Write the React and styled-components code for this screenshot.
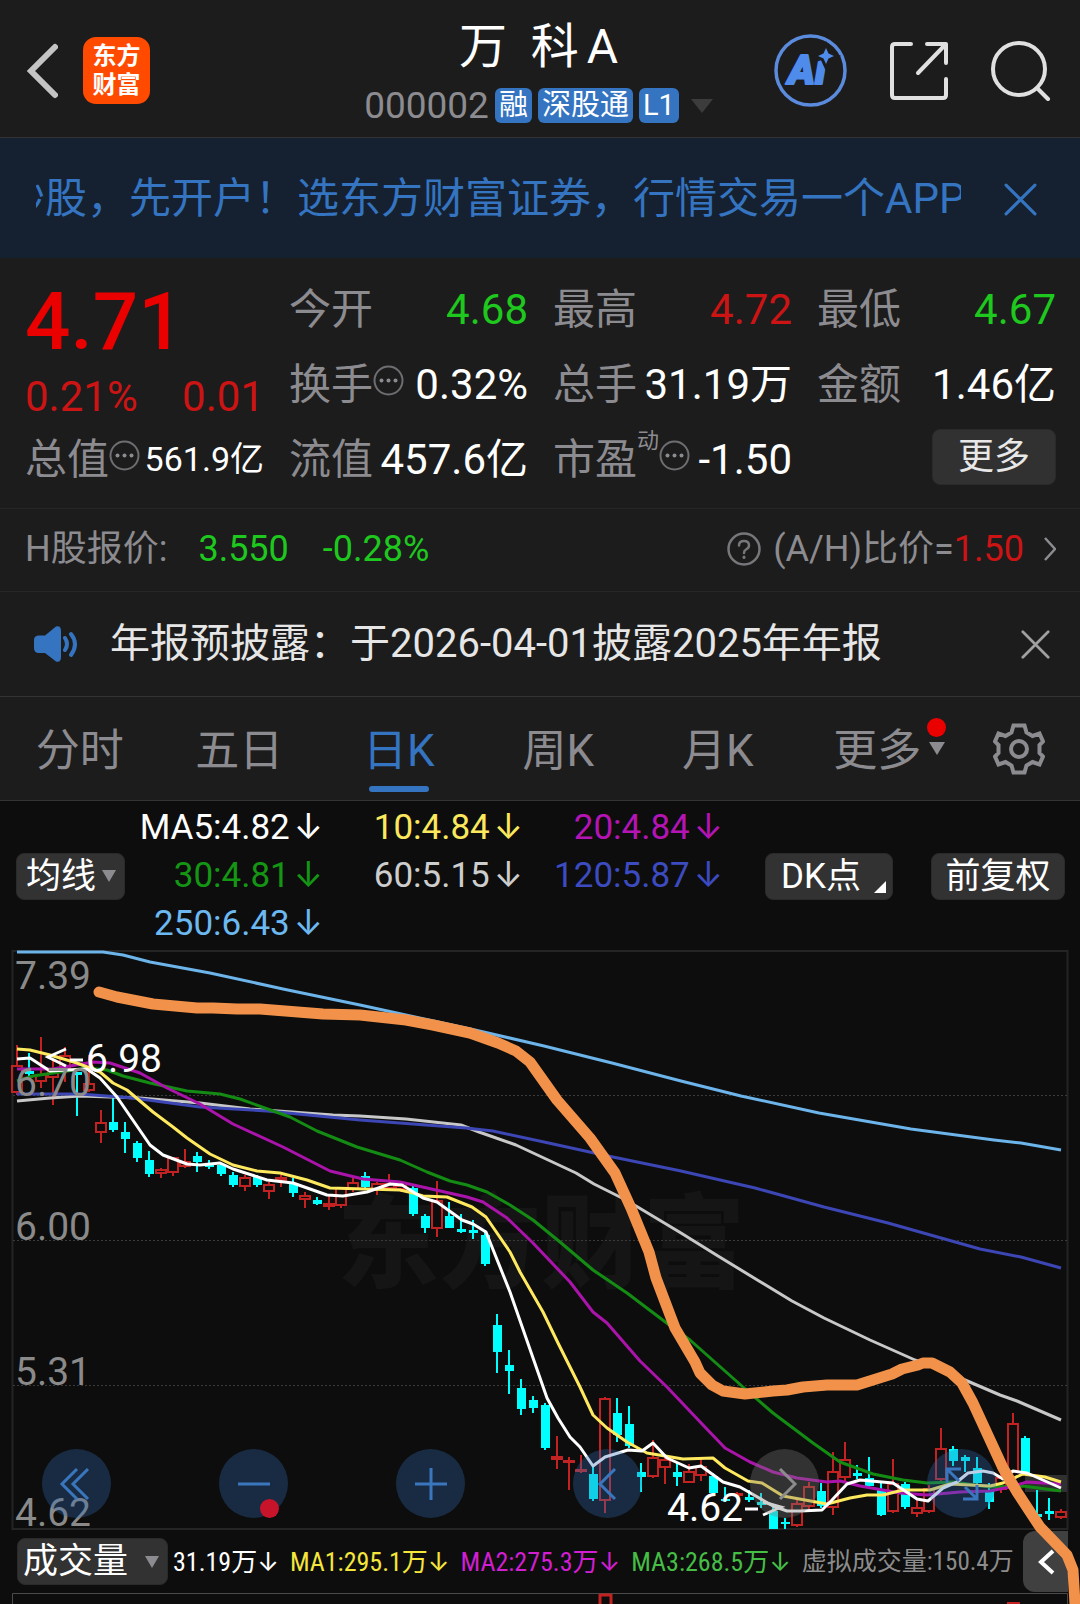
import React from "react";
import styled, { createGlobalStyle } from "styled-components";

const GlobalStyle = createGlobalStyle`
  *, *::before, *::after { box-sizing: border-box; }
  body {
    margin: 0;
    background: #0d0d0d;
    font-family: Roboto, "Noto Sans CJK SC", sans-serif;
    color: #ffffff;
  }
  button, select { font-family: inherit; margin: 0; }
  h1, p, dl, dt, dd { margin: 0; font-weight: 400; }
  svg { display: block; }
`;

const color = {
  panel: "#1c1c1c",
  line: "#333333",
  muted: "#8c8b90",
  accent: "#3474c0",
  up: "#cc1414",
  down: "#1ec81e",
};

const Page = styled.div`
  display: flex;
  flex-direction: column;
  overflow: hidden;
`;

const IconButton = styled.button`
  display: flex;
  align-items: center;
  justify-content: center;
  flex: none;
  padding: 0;
  border: 0;
  background: none;
  color: ${(p) => p.$color || "#e0e0e0"};
  cursor: pointer;
`;

/* ---------- header ---------- */

const Header = styled.header`
  display: grid;
  grid-template-columns: 1fr auto 1fr;
  align-items: center;
  height: 138px;
  padding: 4px 29px 0 26px;
  background: ${color.panel};
  border-bottom: 1px solid ${color.line};
`;

const HeaderSide = styled.div`
  display: flex;
  align-items: center;
  gap: ${(p) => p.$gap}px;
  justify-content: ${(p) => (p.$end ? "flex-end" : "flex-start")};
`;

const Logo = styled.div`
  display: flex;
  flex-direction: column;
  align-items: center;
  justify-content: center;
  width: 67px;
  height: 67px;
  border-radius: 13px;
  background: #ff4a00;
  font-size: 24px;
  line-height: 29px;
  font-weight: 700;
`;

const Title = styled.div`
  display: flex;
  flex-direction: column;
  align-items: center;
  gap: 8px;
  padding-top: 6px;
`;

const StockName = styled.h1`
  font-size: 48px;
  line-height: 56px;
  white-space: pre;
`;

const ShareClass = styled.span`
  margin-left: 8px;
`;

const CodeRow = styled.div`
  display: flex;
  align-items: center;
  gap: 6px;
  height: 46px;
  color: ${color.muted};
  font-size: 37px;
  line-height: 46px;
`;

const Badge = styled.span`
  padding: 0 4px;
  border-radius: 6px;
  background: ${color.accent};
  color: #ffffff;
  font-size: 29px;
  line-height: 35px;
`;

const Caret = styled.span`
  flex: none;
  width: 0;
  height: 0;
  border-left: ${(p) => p.$w}px solid transparent;
  border-right: ${(p) => p.$w}px solid transparent;
  border-top: ${(p) => p.$h}px solid ${(p) => p.$color || color.muted};
`;

const CodeCaret = styled(Caret)`
  margin-left: 6px;
`;

/* ---------- promo banner ---------- */

const Promo = styled.section`
  display: flex;
  align-items: center;
  height: 120px;
  padding: 2px 43px 0 36px;
  gap: 43px;
  background: #152130;
`;

const PromoText = styled.a`
  flex: 1;
  min-width: 0;
  overflow: hidden;
  white-space: nowrap;
  color: ${color.accent};
  font-size: 42px;
  line-height: 60px;
  text-indent: -33px;
  text-decoration: none;
`;

/* ---------- quote ---------- */

const Quote = styled.section`
  display: grid;
  grid-template-columns: repeat(4, minmax(0, 1fr));
  grid-auto-rows: 75px;
  column-gap: 25px;
  padding: 14px 24px 11px 25px;
  background: ${color.panel};
  border-bottom: 1px solid #262626;
`;

const Price = styled.div`
  grid-row: span 2;
  color: #eb0000;
`;

const Last = styled.p`
  font-size: 80px;
  line-height: 100px;
  font-weight: 500;
`;

const Change = styled.p`
  display: flex;
  justify-content: space-between;
  color: ${color.up};
  font-size: 42px;
  line-height: 50px;
`;

const Stat = styled.dl`
  display: flex;
  align-items: center;
  justify-content: space-between;
  white-space: nowrap;
  font-size: 42px;
  line-height: 75px;
`;

const StatName = styled.dt`
  display: flex;
  align-items: center;
  color: ${color.muted};
  svg { margin-bottom: 8px; }
`;

const Superscript = styled.sup`
  align-self: flex-start;
  font-size: 22px;
  line-height: 38px;
`;

const StatValue = styled.dd`
  color: ${(p) => p.$color || "#ffffff"};
  font-size: ${(p) => (p.$small ? 34 : 42)}px;
`;

const MoreButton = styled.button`
  align-self: center;
  justify-self: end;
  width: 124px;
  height: 56px;
  margin-bottom: 6px;
  padding: 0;
  border: 1px solid #2a2a2a;
  border-radius: 8px;
  background: #313131;
  color: #e8e8e8;
  font-size: 36px;
  line-height: 48px;
`;

/* ---------- H share row and notice ---------- */

const HShare = styled.a`
  display: flex;
  align-items: center;
  height: 83px;
  padding: 0 24px 2px 25px;
  background: ${color.panel};
  border-bottom: 1px solid #262626;
  color: ${color.muted};
  font-size: 36px;
  line-height: 48px;
  white-space: nowrap;
  text-decoration: none;
`;

const HValue = styled.span`
  margin-left: ${(p) => p.$gap}px;
  color: ${(p) => p.$color};
`;

const Ratio = styled.span`
  display: flex;
  align-items: center;
  gap: 12px;
  margin-left: auto;
`;

const RatioArrow = styled.span`
  margin-left: 8px;
`;

const Notice = styled.section`
  display: flex;
  align-items: center;
  height: 105px;
  padding: 0 30px 0 33px;
  background: ${color.panel};
  border-bottom: 1px solid ${color.line};
  color: #e6e6e6;
`;

const NoticeText = styled.p`
  flex: 1;
  margin-left: 31px;
  font-size: 40px;
  line-height: 60px;
  white-space: nowrap;
`;

/* ---------- period tabs ---------- */

const Tabs = styled.nav`
  display: flex;
  height: 104px;
  background: ${color.panel};
  border-bottom: 1px solid ${color.line};
`;

const Tab = styled.button`
  position: relative;
  flex: 1;
  padding: 4px 0 0;
  border: 0;
  background: none;
  color: ${(p) => (p.$active ? color.accent : color.muted)};
  font-size: 44px;
  line-height: 60px;
  &::after {
    content: "";
    display: ${(p) => (p.$active ? "block" : "none")};
    position: absolute;
    left: 50%;
    bottom: 8px;
    width: 60px;
    height: 6px;
    margin-left: -30px;
    border-radius: 3px;
    background: ${color.accent};
  }
`;

const TabMark = styled.span`
  position: absolute;
  right: 11px;
  top: 21px;
  display: flex;
  flex-direction: column;
  align-items: center;
  gap: 5px;
  width: 19px;
`;

const Dot = styled.span`
  width: 19px;
  height: 19px;
  border-radius: 50%;
  background: #eb0000;
`;

const Settings = styled(IconButton)`
  width: 123px;
`;

/* ---------- moving average legend ---------- */

const Legend = styled.section`
  display: flex;
  align-items: center;
  padding: 3px 15px 0 16px;
`;

const SelectBox = styled.label`
  position: relative;
  display: flex;
  align-items: center;
  flex: none;
`;

const Picker = styled.select`
  appearance: none;
  width: ${(p) => p.$width}px;
  height: 47px;
  padding: 0 0 0 ${(p) => p.$pad}px;
  border: 1px solid #2a2a2a;
  border-radius: 8px;
  background: #323232;
  color: #ffffff;
  font-size: 35px;
  line-height: 45px;
`;

const PickerCaret = styled(Caret)`
  position: absolute;
  right: 9px;
  pointer-events: none;
`;

const Averages = styled.div`
  flex: 1;
  display: grid;
  grid-template-columns: 19fr 20fr 20fr;
  grid-auto-rows: 48px;
  justify-items: end;
  padding-left: 8px;
`;

const Arrow = styled.span`
  font-family: Inter, sans-serif;
  line-height: 1;
`;

const Average = styled.span`
  color: ${(p) => p.$color};
  font-size: 35px;
  line-height: 48px;
  white-space: nowrap;
  ${Arrow} { margin-left: 4px; }
`;

const ToolButton = styled.button`
  position: relative;
  flex: none;
  width: ${(p) => p.$width}px;
  height: 47px;
  margin-left: ${(p) => p.$gap}px;
  padding: 0 ${(p) => p.$padRight || 0}px 0 0;
  border: 1px solid #2a2a2a;
  border-radius: 8px;
  background: #323232;
  color: #ffffff;
  font-size: 35px;
  line-height: 45px;
`;

const Corner = styled.span`
  position: absolute;
  right: 6px;
  bottom: 6px;
  border-left: 12px solid transparent;
  border-bottom: 12px solid #ffffff;
`;

/* ---------- chart ---------- */

const ChartArea = styled.section`
  position: relative;
`;

const Plot = styled.div`
  position: relative;
`;

const Canvas = styled.svg`
  width: 100%;
  height: auto;
`;

const Drawing = styled.svg`
  position: absolute;
  inset: 0;
  width: 100%;
  height: 100%;
  pointer-events: none;
`;

const Controls = styled.div`
  position: absolute;
  left: 42px;
  right: 84px;
  bottom: 13px;
  display: flex;
  justify-content: space-between;
`;

const RoundButton = styled(IconButton)`
  position: relative;
  width: 69px;
  height: 69px;
  border-radius: 50%;
  background: ${(p) => (p.$off ? "rgba(120,120,120,0.35)" : "rgba(50,110,180,0.32)")};
  color: ${(p) => (p.$off ? "#8c8c8c" : "#3a76bd")};
`;

const ZoomDot = styled(Dot)`
  position: absolute;
  right: 9px;
  bottom: 0;
  background: #c8142a;
`;

const VolumeRow = styled.div`
  display: flex;
  align-items: center;
  height: 61px;
  padding: 0 12px 0 17px;
  white-space: nowrap;
`;

const VolumeItem = styled.span`
  margin-left: ${(p) => p.$gap}px;
  color: ${(p) => p.$color};
  font-family: "Roboto Condensed", Roboto, "Noto Sans CJK SC", sans-serif;
  font-size: ${(p) => p.$size || 26}px;
  line-height: 46px;
`;

const Collapse = styled(IconButton)`
  width: 45px;
  height: 61px;
  margin-left: auto;
  border-radius: 12px 0 0 12px;
  background: #404040;
  color: #ffffff;
`;

const averages = [
  ["MA5:4.82", "#ffffff"],
  ["10:4.84", "#fbe85c"],
  ["20:4.84", "#b414b4"],
  ["30:4.81", "#149614"],
  ["60:5.15", "#cdcdcd"],
  ["120:5.87", "#3c4bc0"],
  ["250:6.43", "#6cb8f0"],
];

// Each candle: direction, high, low, body top, body bottom,
// in thirds of a unit below the block's origin.
const candleBlocks = [
  {
    origin: 940,
    first: 0,
    rows: [
      ["r", 315, 465, 375, 460], ["c", 340, 410, 392, 403], ["r", 290, 445, 402, 425],
      ["r", 360, 495, 385, 415], ["r", 322, 425, 345, 390], ["c", 395, 527, 397, 406],
      ["r", 345, 455, 430, 453], ["r", 510, 608, 545, 580], ["c", 475, 577, 547, 570],
      ["c", 546, 640, 577, 596], ["c", 603, 665, 610, 653], ["c", 634, 710, 660, 703],
      ["r", 685, 714, 687, 701], ["r", 650, 708, 652, 698], ["r", 628, 684, 664, 680],
      ["c", 636, 696, 647, 665], ["c", 660, 688, 670, 680], ["c", 668, 709, 675, 703],
      ["c", 697, 740, 704, 735], ["r", 705, 752, 710, 742], ["c", 704, 740, 710, 735],
      ["r", 725, 778, 731, 755], ["r", 705, 740, 712, 722], ["c", 715, 770, 730, 758],
      ["r", 755, 803, 764, 780], ["c", 770, 796, 780, 791], ["r", 765, 809, 788, 801],
    ],
  },
  {
    origin: 1140,
    first: 27,
    rows: [
      ["r", 140, 203, 142, 199], ["r", 115, 155, 127, 150], ["c", 97, 143, 108, 140],
      ["r", 125, 165, 128, 150], ["r", 103, 150, 130, 148], ["r", 128, 155, 135, 150],
      ["c", 137, 227, 143, 221], ["c", 222, 278, 229, 265], ["r", 123, 290, 180, 268],
      ["c", 185, 265, 229, 265], ["c", 222, 278, 266, 277], ["c", 240, 297, 271, 278],
      ["c", 270, 378, 285, 373], ["c", 523, 698, 556, 636], ["c", 630, 762, 675, 692],
      ["c", 717, 824, 744, 806], ["c", 768, 818, 781, 805], ["c", 790, 931, 795, 925],
      ["r", 888, 987, 948, 960], ["r", 951, 1050, 960, 970], ["r", 945, 998, 987, 997],
      ["c", 975, 1082, 1001, 1076], ["r", 772, 1119, 774, 1084], ["c", 774, 906, 820, 886],
      ["c", 799, 925, 851, 917], ["c", 969, 1056, 995, 1012],
    ],
  },
  {
    origin: 1340,
    first: 53,
    rows: [
      ["r", 300, 413, 352, 410], ["r", 350, 432, 358, 383], ["c", 370, 438, 395, 412],
      ["r", 372, 430, 392, 428], ["r", 352, 423, 378, 408], ["c", 400, 465, 408, 460],
      ["c", 440, 485, 478, 484], ["r", 455, 470, 460, 467], ["c", 450, 485, 472, 480],
      ["c", 458, 505, 486, 496], ["c", 500, 568, 514, 568], ["c", 535, 568, 545, 552],
      ["r", 470, 562, 490, 558], ["r", 425, 510, 438, 500], ["c", 428, 505, 452, 498],
      ["r", 335, 525, 394, 503], ["r", 307, 425, 356, 415], ["c", 375, 418, 400, 408],
      ["c", 350, 440, 415, 437], ["c", 428, 527, 450, 525], ["r", 358, 520, 430, 517],
      ["c", 425, 507, 432, 500], ["r", 480, 532, 500, 522], ["r", 435, 518, 445, 515],
      ["r", 263, 430, 323, 420], ["c", 318, 378, 326, 362], ["c", 345, 395, 352, 362],
      ["c", 350, 450, 385, 430], ["c", 430, 507, 450, 487], ["r", 400, 460, 410, 450],
      ["r", 219, 400, 248, 395], ["c", 287, 400, 294, 400], ["c", 450, 530, 522, 530],
      ["c", 475, 540, 513, 522], ["r", 508, 538, 512, 535],
    ],
  },
];

const candles = candleBlocks.flatMap(({ origin, first, rows }) =>
  rows.map(([kind, ...ys], i) => {
    const [high, low, top, bottom] = ys.map((y) => Math.round(origin + y / 3));
    return { kind, x: 17 + (first + i) * 12, high, low, top, bottom };
  })
);

const lines = [
  ["#6cb4ea", "17,952 103,952 123,955 150,962 210,973 283,989 360,1005 475,1030 544,1046 612,1063 681,1081 741,1096 819,1113 911,1129 994,1140 1021,1143 1061,1150"],
  ["#c8c8c8", "17,1101 50,1098 80,1096 140,1098 200,1103 250,1109 333,1115 360,1116 406,1119 461,1125 479,1132 516,1145 576,1173 594,1184 622,1198 636,1206 681,1233 718,1256 759,1281 792,1301 824,1318 870,1340 915,1360 965,1380 1000,1395 1017,1401 1061,1420"],
  ["#3c46b4", "17,1094 80,1094 133,1098 200,1107 267,1111 360,1120 466,1128 493,1131 544,1142 608,1156 681,1171 755,1188 824,1207 888,1223 980,1249 1021,1257 1061,1268"],
  ["#148c14", "17,1081 33,1076 67,1071 87,1068 107,1070 123,1076 150,1083 187,1091 220,1094 240,1099 290,1117 317,1131 357,1147 400,1160 427,1172 450,1181 467,1185 487,1192 510,1205 533,1220 560,1242 593,1270 627,1293 668,1324 690,1340 743,1387 773,1413 813,1443 840,1462 873,1474 903,1480 927,1483 953,1482 990,1487 1023,1486 1061,1491"],
  ["#aa14aa", "17,1069 53,1069 93,1062 110,1063 140,1073 167,1088 200,1104 233,1124 283,1147 330,1171 363,1179 400,1182 427,1188 467,1197 483,1202 507,1218 533,1243 570,1282 593,1312 607,1323 640,1361 667,1387 703,1425 725,1448 750,1462 773,1472 797,1478 827,1482 840,1481 860,1486 900,1493 927,1495 960,1492 990,1491 1010,1487 1027,1482 1061,1484"],
  ["#ffe95f", "17,1049 30,1050 50,1055 77,1063 100,1072 113,1083 127,1090 153,1112 173,1127 187,1138 210,1154 233,1165 257,1171 280,1173 307,1180 330,1188 400,1190 413,1193 423,1196 447,1197 472,1207 486,1217 510,1252 520,1272 543,1312 558,1343 580,1387 593,1415 607,1428 627,1442 647,1453 683,1459 713,1458 725,1468 748,1481 762,1483 783,1496 827,1504 850,1498 867,1495 883,1495 903,1490 930,1490 950,1484 990,1486 1003,1483 1023,1474 1045,1477 1061,1482"],
  ["#ffffff", "17,1059 30,1058 50,1071 67,1070 87,1069 100,1078 117,1097 150,1145 163,1155 187,1164 200,1165 220,1163 233,1169 267,1180 293,1183 327,1195 343,1196 367,1192 390,1184 402,1185 423,1198 437,1202 462,1220 473,1224 486,1232 510,1292 547,1398 558,1418 570,1437 580,1447 593,1466 605,1457 628,1450 642,1451 653,1443 667,1458 689,1468 701,1466 723,1482 740,1487 773,1506 787,1511 800,1511 822,1510 832,1500 847,1484 860,1480 893,1483 917,1499 928,1501 943,1488 957,1482 968,1473 983,1471 993,1473 1003,1479 1013,1471 1027,1473 1061,1488"],
];

const trend =
  "99,992 117,997 153,1004 197,1008 213,1008 237,1009 260,1009 323,1014 360,1015 406,1020 433,1025 470,1033 498,1043 516,1051 530,1062 557,1100 590,1138 615,1173 631,1208 649,1252 656,1278 675,1328 695,1362 700,1373 712,1385 723,1391 745,1394 773,1391 787,1390 803,1387 827,1385 857,1385 892,1374 902,1369 918,1365 923,1363 932,1363 950,1372 962,1383 973,1403 1003,1468 1017,1492 1040,1527 1067,1555 1073,1570 1075,1604";

const axis = [
  ["7.39", 989],
  ["6.70", 1096],
  ["6.00", 1240],
  ["5.31", 1385],
  ["4.62", 1526],
];

function Close({ size }) {
  return (
    <svg width={size} height={size} viewBox="0 0 32 32" stroke="currentColor" strokeWidth="3" strokeLinecap="round">
      <path d="M2 2 30 30M30 2 2 30" />
    </svg>
  );
}

function InfoDots() {
  return (
    <svg width="31" height="31" viewBox="0 0 31 31" fill="none">
      <circle cx="15.5" cy="15.5" r="14" stroke="#6e6e72" strokeWidth="2" />
      <g fill="#8c8b90">
        <circle cx="8.5" cy="15.5" r="2" />
        <circle cx="15.5" cy="15.5" r="2" />
        <circle cx="22.5" cy="15.5" r="2" />
      </g>
    </svg>
  );
}

function StatCell({ name, value, tone, small, info, sup }) {
  return (
    <Stat>
      <StatName>
        {name}
        {sup && <Superscript>{sup}</Superscript>}
        {info && <InfoDots />}
      </StatName>
      <StatValue $color={tone} $small={small}>{value}</StatValue>
    </Stat>
  );
}

function Candle({ kind, x, high, low, top, bottom }) {
  const h = Math.max(bottom - top, 2);
  if (kind === "c") {
    return (
      <g fill="#00ffff">
        <rect x={x - 1} y={high} width="2" height={low - high} />
        <rect x={x - 4} y={top} width="9" height={h} />
      </g>
    );
  }
  return (
    <g fill="none" stroke="#c32222" strokeWidth="2">
      <path d={`M${x} ${high}V${top}M${x} ${bottom}V${low}`} />
      <rect x={x - 5} y={top + 1} width="10" height={Math.max(h - 2, 1)} />
    </g>
  );
}

function PriceChart() {
  return (
    <Canvas viewBox="0 948 1080 583" role="img" aria-label="日K">
      <text x="541" y="1280" textAnchor="middle" fontSize="102" fontWeight="900" fontFamily="Noto Sans CJK SC, sans-serif" fill="#151515">
        东方财富
      </text>
      <rect x="12.5" y="951" width="1055" height="578" fill="none" stroke="#242424" strokeWidth="2" />
      <g stroke="#3a3a3a" strokeDasharray="2 2">
        <path d="M13 1095.5H1067M13 1240.5H1067M13 1385.5H1067" />
      </g>
      <rect x="1025" y="1475" width="42" height="17" fill="#303030" />
      {candles.map((c) => <Candle key={c.x} {...c} />)}
      <g fill="none" strokeWidth="3" strokeLinejoin="round">
        {lines.map(([stroke, points]) => <polyline key={stroke} stroke={stroke} points={points} />)}
      </g>
      <g fill="#8a8a8a" fontSize="39" fontFamily="Roboto, sans-serif">
        {axis.map(([label, y]) => <text key={label} x="15" y={y}>{label}</text>)}
      </g>
      <g fill="none" stroke="#ffffff" strokeWidth="3">
        <path d="M66 1049 48 1057 66 1066M70 1060H83" />
        <path d="M745 1509H758M763 1502 781 1507 763 1515" />
      </g>
      <g fill="#ffffff" fontSize="39" fontFamily="Roboto, sans-serif">
        <text x="86" y="1072">6.98</text>
        <text x="667" y="1521">4.62</text>
      </g>
    </Canvas>
  );
}

const controlIcons = [
  ["向左到底", "M18 3 3 18 18 33M29 3 14 18 29 33"],
  ["缩小", "M2 18H34"],
  ["放大", "M2 18H34M18 2V34"],
  ["向左", "M25 3 10 18 25 33"],
  ["向右", "M13 3 28 18 13 33"],
  ["全屏", "M3 17V3H17M3 3 15 15M33 19V33H19M33 33 21 21"],
];

export default function App() {
  return (
    <Page>
      <GlobalStyle />

      <Header>
        <HeaderSide $gap={25}>
          <IconButton aria-label="返回" $color="#c4c4c4">
            <svg width="32" height="56" viewBox="0 0 32 56" fill="none" stroke="currentColor" strokeWidth="6" strokeLinecap="round">
              <path d="M29 4 5 28 29 52" />
            </svg>
          </IconButton>
          <Logo>
            <span>东方</span>
            <span>财富</span>
          </Logo>
        </HeaderSide>
        <Title>
          <StockName>{"万  科"}<ShareClass>A</ShareClass></StockName>
          <CodeRow>
            <span>000002</span>
            <Badge>融</Badge>
            <Badge>深股通</Badge>
            <Badge>L1</Badge>
            <CodeCaret $w={11} $h={14} $color="#3c3c3c" />
          </CodeRow>
        </Title>
        <HeaderSide $end $gap={43}>
          <IconButton aria-label="Ai">
            <svg width="73" height="73" viewBox="0 0 73 73">
              <circle cx="36.5" cy="36.5" r="34.5" fill="none" stroke="#5a8bdc" strokeWidth="3.5" />
              <text x="14" y="50" fontSize="41" fontWeight="900" fontStyle="italic" fontFamily="Roboto, sans-serif" fill="#4f8bea" stroke="#4f8bea" strokeWidth="2" strokeLinejoin="round">Ai</text>
              <path d="M52 14 54.500 19.500 60 22 54.500 24.500 52 30 49.500 24.500 44 22 49.500 19.500Z" fill="#4f8bea" stroke="#1c1c1c" strokeWidth="6" paintOrder="stroke" />
            </svg>
          </IconButton>
          <IconButton aria-label="分享">
            <svg width="58" height="58" viewBox="0 0 58 58" fill="none" stroke="currentColor" strokeWidth="4" strokeLinecap="round" strokeLinejoin="round">
              <path d="M21 2H5Q2 2 2 5V53Q2 56 5 56H53Q56 56 56 53V37M37 2H56V21M55 3 28 31" />
            </svg>
          </IconButton>
          <IconButton aria-label="搜索">
            <svg width="60" height="60" viewBox="0 0 60 60" fill="none" stroke="currentColor" strokeWidth="4" strokeLinecap="round">
              <circle cx="28" cy="28" r="26" />
              <path d="M46 47 57 58" />
            </svg>
          </IconButton>
        </HeaderSide>
      </Header>

      <Promo>
        <PromoText href="#account">炒股，先开户！选东方财富证券，行情交易一个APP</PromoText>
        <IconButton aria-label="关闭" $color="#3474c0"><Close size={33} /></IconButton>
      </Promo>

      <Quote>
        <Price>
          <Last>4.71</Last>
          <Change><span>0.21%</span><span>0.01</span></Change>
        </Price>
        <StatCell name="今开" value="4.68" tone={color.down} />
        <StatCell name="最高" value="4.72" tone={color.up} />
        <StatCell name="最低" value="4.67" tone={color.down} />
        <StatCell name="换手" info value="0.32%" />
        <StatCell name="总手" value="31.19万" />
        <StatCell name="金额" value="1.46亿" />
        <StatCell name="总值" info small value="561.9亿" />
        <StatCell name="流值" value="457.6亿" />
        <StatCell name="市盈" sup="动" info value="-1.50" />
        <MoreButton>更多</MoreButton>
      </Quote>

      <HShare href="#h-share">
        <span>H股报价:</span>
        <HValue $gap={31} $color={color.down}>3.550</HValue>
        <HValue $gap={34} $color={color.down}>-0.28%</HValue>
        <Ratio>
          <svg width="34" height="34" viewBox="0 0 34 34" fill="none" stroke="#77767a" strokeWidth="2.5" strokeLinecap="round">
            <circle cx="17" cy="17" r="15.500" />
            <path d="M12 13.500Q12 9 17 9T22 13.500Q22 16 19 17.500Q17 18.500 17 21" />
            <path d="M17 25V25.500" strokeWidth="3" />
          </svg>
          <span>(A/H)比价=<HValue $gap={0} $color={color.up}>1.50</HValue></span>
          <RatioArrow>
            <svg width="12" height="24" viewBox="0 0 12 24" fill="none" stroke="#8c8b90" strokeWidth="2.500">
              <path d="M1 1 11 12 1 23" />
            </svg>
          </RatioArrow>
        </Ratio>
      </HShare>

      <Notice>
        <svg width="46" height="38" viewBox="0 0 46 38" fill="none" stroke="#3474c0" strokeWidth="4" strokeLinecap="round">
          <path d="M6 10.500H12L23 1.500Q28 0 28 6V32Q28 38 23 36.500L12 28H6Q1 28 1 23V15Q1 10.500 6 10.500Z" fill="#3474c0" stroke="none" />
          <path d="M32 13Q36 19 32 25M38 9Q46 19 38 30" />
        </svg>
        <NoticeText>年报预披露：于2026-04-01披露2025年年报</NoticeText>
        <IconButton aria-label="关闭" $color="#a0a0a0"><Close size={29} /></IconButton>
      </Notice>

      <Tabs>
        <Tab>分时</Tab>
        <Tab>五日</Tab>
        <Tab $active aria-current="true">日K</Tab>
        <Tab>周K</Tab>
        <Tab>月K</Tab>
        <Tab>
          更多
          <TabMark>
            <Dot />
            <Caret $w={8} $h={13} />
          </TabMark>
        </Tab>
        <Settings aria-label="设置" $color={color.muted}>
          <svg width="52" height="52" viewBox="0 0 52 52" fill="none" stroke="currentColor" strokeWidth="4">
            <path d="M20.5 2.5H31.5L33.5 9.5 39.5 13 46.5 10.5 50 18.5 46.5 22V30L50 33.5 46.5 41.5 39.5 39 33.5 42.5 31.5 49.5H20.5L18.5 42.5 12.5 39 5.5 41.5 2 33.5 5.5 30V22L2 18.5 5.5 10.5 12.5 13 18.5 9.5Z" />
            <circle cx="26" cy="26" r="8" />
          </svg>
        </Settings>
      </Tabs>

      <Legend>
        <SelectBox>
          <Picker $width={109} $pad={9} aria-label="主图指标"><option>均线</option></Picker>
          <PickerCaret $w={7} $h={12} />
        </SelectBox>
        <Averages>
          {averages.map(([label, tone]) => (
            <Average key={label} $color={tone}>
              {label}
              <Arrow>↓</Arrow>
            </Average>
          ))}
        </Averages>
        <ToolButton $width={128} $gap={42} $padRight={16}>DK点<Corner /></ToolButton>
        <ToolButton $width={134} $gap={38}>前复权</ToolButton>
      </Legend>

      <ChartArea>
        <Plot>
          <PriceChart />
          <Controls>
            {controlIcons.map(([name, d], i) => (
              <RoundButton key={name} aria-label={name} $off={i === 4}>
                <svg width="36" height="36" viewBox="0 0 36 36" fill="none" stroke="currentColor" strokeWidth="3">
                  <path d={d} />
                </svg>
                {i === 1 && <ZoomDot />}
              </RoundButton>
            ))}
          </Controls>
        </Plot>
        <VolumeRow>
          <SelectBox>
            <Picker $width={151} $pad={5} aria-label="副图指标"><option>成交量</option></Picker>
            <PickerCaret $w={7} $h={12} />
          </SelectBox>
          <VolumeItem $gap={5} $color="#ffffff">31.19万<Arrow>↓</Arrow></VolumeItem>
          <VolumeItem $gap={11} $color="#f5e63c">MA1:295.1万<Arrow>↓</Arrow></VolumeItem>
          <VolumeItem $gap={11} $color="#d21ed2">MA2:275.3万<Arrow>↓</Arrow></VolumeItem>
          <VolumeItem $gap={11} $color="#46be46">MA3:268.5万<Arrow>↓</Arrow></VolumeItem>
          <VolumeItem $gap={11} $color="#8c8c8c" $size={25}>虚拟成交量:150.4万</VolumeItem>
          <Collapse aria-label="展开">
            <svg width="18" height="26" viewBox="0 0 18 26" fill="none" stroke="currentColor" strokeWidth="4">
              <path d="M16 2 4 13 16 24" />
            </svg>
          </Collapse>
        </VolumeRow>
        <Canvas viewBox="0 0 1080 12" role="img" aria-label="成交量">
          <path d="M12.500 12V1.500H1067.500V12" fill="none" stroke="#4a4a4a" />
          <path d="M600 12V2M611 12V2M600 3H611M1007 11.500H1020" fill="none" stroke="#c32222" strokeWidth="3" />
        </Canvas>
        <Drawing viewBox="0 948 1080 656" aria-hidden="true">
          <polyline points={trend} fill="none" stroke="#f2924a" strokeWidth="11" strokeLinecap="round" strokeLinejoin="round" />
        </Drawing>
      </ChartArea>
    </Page>
  );
}
